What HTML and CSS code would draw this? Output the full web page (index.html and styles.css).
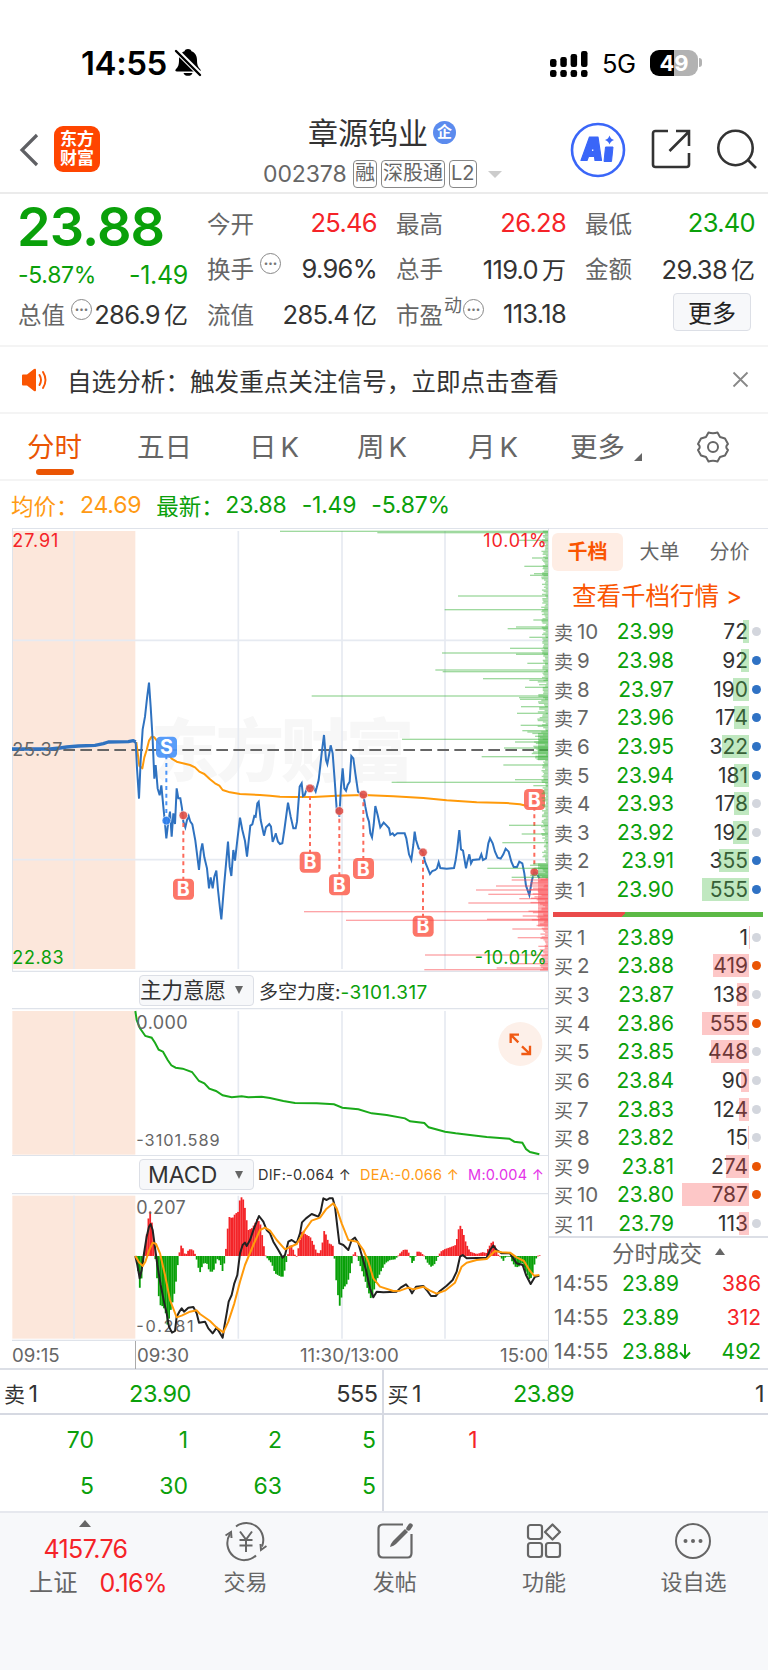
FILE: index.html
```
<!doctype html>
<html lang="zh-CN">
<head>
  <meta charset="utf-8">
  <title>章源钨业 002378</title>
  <meta name="viewport" content="width=device-width, initial-scale=1">
  <link rel="stylesheet" href="styles.css">
</head>

<body>
  <div class="statusbar">
    <span class="clock">14:55</span>
    <svg class="bell" width="28" height="30" viewBox="0 0 28 30">
      <path d="M14 1c1.800 0 3 .8 3.500 2.300C21 4.500 23 8 23 12c0 5 1 7 3 9 1.200 1.300.8 2.500-1 2.500H3c-1.800 0-2.200-1.200-1-2.500 2-2 3-4 3-9 0-4 2-7.500 5.500-8.700C11 1.800 12.200 1 14 1zM9.500 25h9c-1 3.800-8 3.800-9 0z"/>
      <path d="M3 1l26 26" stroke="#fff" stroke-width="2.200"/>
      <path d="M2 3l25 25" stroke="#fff" stroke-width="4.500"/>
      <path d="M2 3l24 24" stroke="#000" stroke-width="2.400" stroke-linecap="round"/>
    </svg>
    <svg class="signal" width="38" height="28" viewBox="0 0 38 28">
      <rect x="0" y="10" width="6.500" height="8" rx="2.200"/><rect x="10.300" y="8" width="6.500" height="10" rx="2.200"/><rect x="20.600" y="5" width="6.500" height="13" rx="2.200"/><rect x="31" y="2" width="6.500" height="16" rx="2.200"/>
      <rect x="0" y="21" width="6.500" height="7" rx="2.200"/><rect x="10.300" y="21" width="6.500" height="7" rx="2.200"/><rect x="20.600" y="21" width="6.500" height="7" rx="2.200"/><rect x="31" y="21" width="6.500" height="7" rx="2.200"/>
    </svg>
    <span class="net">5G</span>
    <div class="battery"><span>49</span></div>
    <i class="battery_tip"></i>
  </div>

  <div class="header">
    <svg class="back" width="20" height="36" viewBox="0 0 20 36"><path d="M18 3L3 18l15 15" fill="none" stroke="#5f6064" stroke-width="3.200"/></svg>
    <div class="logo"><span>东方</span><span>财富</span></div>
    <div class="stock">
      <div class="stock_name">章源钨业<span class="ent">企</span></div>
      <div class="stock_code"><b>002378</b><i>融</i><i>深股通</i><i>L2</i><em></em></div>
    </div>
    <svg class="h_icon ai" width="56" height="56" viewBox="0 0 56 56">
      <circle cx="28" cy="28" r="26" fill="none" stroke="#3a66f8" stroke-width="2.600"/>
      <path d="M19.500 15h8.500l3.500 23.500h-6.500l-.5-4h-6l-1.500 4H11zM21 29.500h3l-.5-6z" fill="#3a66f8" fill-rule="evenodd" stroke="#3a66f8" stroke-width="1.200" stroke-linejoin="round"/>
      <path d="M35.500 25h7.500l-1.500 14.500h-7.500z" fill="#3a66f8" stroke="#3a66f8" stroke-width="1" stroke-linejoin="round"/>
      <path d="M39.500 13.500q1 3.500 4.500 4.500-3.500 1-4.500 4.500-1-3.500-4.500-4.500 3.500-1 4.500-4.500z" fill="#3a66f8"/>
    </svg>
    <svg class="h_icon share" width="42" height="42" viewBox="0 0 42 42">
      <g fill="none" stroke="#333" stroke-width="2.600">
        <path d="M17 2H4.500Q2 2 2 4.500v31Q2 38 4.500 38h31q2.500 0 2.500-2.500V24"/>
        <path d="M18.500 22L38 2.500M25 2h13v15"/>
      </g>
    </svg>
    <svg class="h_icon search" width="44" height="44" viewBox="0 0 44 44">
      <circle cx="20.500" cy="20" r="17.200" fill="none" stroke="#333" stroke-width="2.600"/>
      <path d="M32.500 31.500l8.500 8.500" stroke="#333" stroke-width="2.600"/>
    </svg>
  </div>

  <div class="quote">
    <div class="quote_main">
      <div class="last green">23.88</div>
      <div class="change green"><span>-5.87%</span><b>-1.49</b></div>
    </div>
    <div class="cell"><span>今开</span><b class="red">25.46</b></div>
    <div class="cell"><span>最高</span><b class="red">26.28</b></div>
    <div class="cell"><span>最低</span><b class="green">23.40</b></div>
    <div class="cell"><span>换手</span><i class="dots">•••</i><b>9.96%</b></div>
    <div class="cell"><span>总手</span><b>119.0<u>万</u></b></div>
    <div class="cell"><span>金额</span><b>29.38<u>亿</u></b></div>
    <div class="cell"><span>总值</span><i class="dots">•••</i><b>286.9<u>亿</u></b></div>
    <div class="cell"><span>流值</span><b>285.4<u>亿</u></b></div>
    <div class="cell"><span>市盈</span><sup>动</sup><i class="dots">•••</i><b>113.18</b></div>
    <div class="cell"><button type="button" class="btn_more">更多</button></div>
  </div>

  <div class="notice">
    <svg width="26" height="28" viewBox="0 0 26 28">
      <path d="M1 8.500h4l7-5.500q2-1 2 1v20q0 2-2 1l-7-5.500H1q-1 0-1-1v-9q0-1 1-1z" fill="#fa5502"/>
      <path d="M17.500 9q3 5 0 10M21 6q5 8 0 16" fill="none" stroke="#fa5502" stroke-width="1.900" stroke-linecap="round"/>
    </svg>
    <span>自选分析：触发重点关注信号，立即点击查看</span>
    <svg class="close" width="17" height="17" viewBox="0 0 17 17"><path d="M1.500 1.500l14 14M15.500 1.500l-14 14" stroke="#888" stroke-width="1.800"/></svg>
  </div>

  <div class="tabs">
    <span class="tab on">分时</span>
    <span class="tab">五日</span>
    <span class="tab">日<b>K</b></span>
    <span class="tab">周<b>K</b></span>
    <span class="tab">月<b>K</b></span>
    <span class="tab tab_more">更多</span>
    <svg class="gear" width="34" height="34" viewBox="0 0 34 34" fill="none" stroke="#666" stroke-width="2">
      <path d="M12.500 2.500Q17 4 21.500 2.500L24 7l5 1.500 3 5.500Q28.500 17 32 20l-3 5.500-5 1.500-2.500 4.500Q17 30 12.500 31.500L10 27l-5-1.500L2 20q3.500-3 0-6l3-5.500L10 7z" stroke-linejoin="round"/>
      <circle cx="17" cy="17" r="5"/>
    </svg>
  </div>

  <div class="legend">
    <span class="orange">均价：</span><b class="orange">24.69</b>
    <span class="green">最新：</span><b class="green">23.88</b><b class="green">-1.49</b><b class="green">-5.87%</b>
  </div>

  <div class="board">
    <div class="charts">
      <!-- all chart panels use 3 svg units per css pixel -->
      <svg class="panel" width="536" height="444" viewBox="36 24 1608 1332">
        <rect x="37" y="33" width="369" height="1314" fill="#fce7db"/>
        <text class="watermark" x="452" y="768" textLength="790">东方财富</text>
        <path class="grid" d="M222 33V1347M715 33V1347M1026 33V1347M1335 33V1347M37 361H1644M37 1019H1644"/>
        <path class="frame" d="M37 1355V25H1644M37 1354H1644"/>
        <path d="M37 690H1644" stroke="#666" stroke-width="6" stroke-dasharray="35 16"/>
        <polyline class="avg" points="409,666 412,690 418,738 427,745 433,712 440,690 447,662 455,650 463,652 475,668 490,685 515,716 530,725 570,735 585,742 598,755 613,762 630,778 645,790 658,797 668,810 690,817 720,822 780,825 810,827 840,830 880,831 940,831 1010,827 1090,825 1180,829 1270,834 1340,841 1430,847 1520,849 1560,853 1590,860 1610,865"/>
        <polyline class="price auction" points="36,687 150,687 180,684 200,681 235,678 285,676 310,671 325,666 385,665 400,662 407,666"/>
        <polyline class="price" points="407,666 411,745 417,836 422,720 428,628 435,590 441,535 447,488 452,560 458,660 463,776 467,735 473,806 479,826 484,796 490,860 494,900 499,955 505,905 510,875 515,950 520,880 525,912 530,805 535,835 541,835 546,865 550,905 556,922 561,900 566,888 571,905 577,913 586,962 592,1010 597,1050 602,995 607,970 613,1012 621,1045 627,1105 632,1072 638,1105 643,1070 649,1052 654,1110 660,1165 664,1198 672,1100 680,1010 684,965 689,1040 694,1068 700,990 705,1022 712,960 720,893 727,930 735,963 741,1010 751,917 757,913 763,888 767,890 772,850 776,845 782,900 792,947 798,922 808,912 813,920 818,966 828,940"/>
        <g transform="translate(810 0)">
          <polyline class="price" points="17,940 24,965 30,972 37,970 43,930 54,848 62,890 70,925 77,925 81,905 89,800 95,790 99,828 104,825 112,800 120,805 130,800 137,815 146,780 155,700 162,645 168,720 172,732 178,700 182,676 188,700 194,780 201,880 204,870 208,890 213,800 218,745 223,805 228,812 233,795 239,785 244,708 250,715 256,760 264,815 272,822 280,825 286,860 292,890 297,905 301,940 306,952 311,915 316,858 323,885 331,922 341,908 350,917 357,925 361,944 368,940 373,947 382,940 404,940 409,955 417,1003 424,1020 430,975 434,935 438,960 446,985 459,997 465,1025 472,1042 480,1062 487,1053 496,1050 501,1045 506,1027 511,1044 530,1046 552,1044 557,1020 562,985 568,930 573,988 579,992 588,1045 592,1025 598,1003 603,1030 608,1020 628,1018 634,1003 639,1020 648,1015 655,970 660,955 668,970 675,995 683,1013 692,1016 700,1003 707,986 716,995 724,1025 731,1041 741,1041 748,1025 757,1030 763,1060 768,1097 778,1125 786,1080 793,1055 800,1060 808,1075"/>
        </g>
        <g id="marks"></g>
        <g id="depth"></g>
        <text class="lbl red" x="37" y="80" textLength="138">27.91</text>
        <text class="lbl" x="37" y="708" textLength="150">25.37</text>
        <text class="lbl green" x="37" y="1331" textLength="154">22.83</text>
        <text class="lbl red" x="1450" y="80" textLength="190">10.01%</text>
        <text class="lbl green" x="1424" y="1331" textLength="216">-10.01%</text>
      </svg>

      <div class="panel_head">
        <button type="button" class="picker">主力意愿<i></i></button>
        <span class="power">多空力度:<b class="green">-3101.317</b></span>
      </div>

      <svg class="panel" width="536" height="148" viewBox="36 144 1608 444">
        <rect x="37" y="153" width="369" height="431" fill="#fce7db"/>
        <path class="grid" d="M222 153V584M715 153V584M1026 153V584M1335 153V584"/>
        <path class="frame strong" d="M36 146H1644M36 587H1644"/>
        <polyline class="force" points="406,153 410,180 420,205 436,228 455,233 465,248 476,269 489,275 503,300 514,316 527,323 548,326 576,336 597,363 613,370 628,386 648,393 668,406 695,412 725,409 745,412 785,410 810,414 850,423 885,429 950,430 1002,433 1027,443 1075,448 1115,460 1160,465 1215,475 1230,484 1273,489 1286,502 1335,515 1367,520 1410,525 1460,531 1528,536 1543,545 1567,548 1578,567 1590,576 1618,583"/>
        <text class="lbl" x="409" y="208" textLength="154">0.000</text>
        <text class="lbl small" x="409" y="559" textLength="250">-3101.589</text>
        <circle cx="1561" cy="252" r="66" fill="#fdf0e9"/>
        <path d="M1555 247L1532 224M1532 249V224H1557M1566 259L1590 282M1590 257V282H1564" fill="none" stroke="#f05a14" stroke-width="7"/>
      </svg>

      <div class="panel_head">
        <button type="button" class="picker picker_macd">MACD<i></i></button>
        <span class="macd_vals"><span>DIF:-0.064 ↑</span><span class="orange">DEA:-0.066 ↑</span><span class="purple">M:0.004 ↑</span></span>
      </div>

      <svg class="panel" width="536" height="148" viewBox="36 699 1608 444">
        <rect x="37" y="707" width="369" height="429" fill="#fce7db"/>
        <path class="grid" d="M222 707V1136M715 707V1136M1026 707V1136M1335 707V1136"/>
        <path class="frame strong" d="M36 701H1644M36 1141H1644"/>
        <g id="hist"></g>
        <text class="lbl" x="409" y="762" textLength="148">0.207</text>
        <text class="lbl small" x="409" y="1117" textLength="172">-0.281</text>
        <polyline class="dif" points="406,888 412,915 419,955 425,930 432,880 440,830 447,800 452,792 458,810 466,870 472,915 482,975 493,1030 500,1060 507,1100 516,1118 525,1113 530,1070 538,1055 545,1045 552,1055 565,1043 580,1041 590,1060 597,1088 615,1085 625,1105 638,1120 650,1103 660,1120 668,1133 673,1100 680,1060 686,1025 695,1005 703,970 712,945 720,880 728,855 735,848 740,858 750,840 762,805 772,780 777,768 790,785 800,810 810,820 820,845 835,870 848,893 855,885 865,845 875,840 890,850 900,820 906,787 918,775 935,762 955,770 962,755 970,715 980,720 988,715 998,715 1005,740 1012,800 1018,850 1030,855 1045,870 1055,840 1065,833 1075,850 1085,885 1098,930 1110,985 1120,1012 1130,995 1150,997 1190,995 1202,983 1218,973 1228,985 1236,1000 1248,980 1270,978 1280,990 1293,1008 1307,1008 1320,993 1340,977 1358,960 1370,935 1380,890 1388,885 1400,895 1460,893 1470,870 1480,857 1490,870 1505,880 1530,880 1538,892 1550,910 1568,915 1578,945 1592,972 1605,950 1618,947"/>
        <polyline class="avg" points="406,888 418,908 428,918 436,905 448,870 458,848 468,852 480,880 495,945 510,1020 530,1072 545,1067 570,1055 590,1051 600,1062 630,1083 650,1103 670,1117 685,1085 703,1030 720,965 735,915 760,855 780,810 795,803 810,812 830,840 855,868 890,852 915,810 935,782 960,773 978,748 1000,730 1010,745 1025,790 1045,840 1072,845 1090,870 1105,905 1120,955 1140,980 1180,993 1200,992 1225,983 1240,988 1270,980 1290,992 1310,1001 1335,992 1365,968 1385,920 1400,908 1430,900 1460,897 1485,873 1505,877 1530,878 1550,892 1572,903 1588,930 1602,947 1618,945"/>
      </svg>

      <div class="axis"><span>09:15</span><span>09:30</span><span>11:30/13:00</span><span>15:00</span></div>
    </div>

    <div class="book">
      <div class="book_tabs"><span class="on">千档</span><span>大单</span><span>分价</span></div>
      <div class="book_link">查看千档行情 <b>&gt;</b></div>
      <div id="asks"></div>
      <div class="ratio"></div>
      <div id="bids"></div>
      <div class="deals_head">分时成交<i></i></div>
      <div class="deal"><span>14:55</span><b class="green">23.89</b><b class="red">386</b></div>
      <div class="deal"><span>14:55</span><b class="green">23.89</b><b class="red">312</b></div>
      <div class="deal"><span>14:55</span><b class="green">23.88<svg width="12" height="15" viewBox="0 0 12 15"><path d="M6 0v13M1 8.500L6 14l5-5.500" fill="none" stroke="#0aa00a" stroke-width="1.900"/></svg></b><b class="green">492</b></div>
    </div>
  </div>

  <div class="queue">
    <div class="side">
      <div class="side_head"><span>卖<b>1</b></span><b class="green">23.90</b><b>555</b></div>
      <div class="lots green"><b>70</b><b>1</b><b>2</b><b>5</b><b>5</b><b>30</b><b>63</b><b>5</b></div>
    </div>
    <div class="side">
      <div class="side_head"><span>买<b>1</b></span><b class="green">23.89</b><b>1</b></div>
      <div class="lots red"><b>1</b></div>
    </div>
  </div>

  <div class="nav">
    <div class="index">
      <i></i>
      <b class="red">4157.76</b>
      <div><span>上证</span><b class="red">0.16%</b></div>
    </div>
    <div class="nav_item">
      <svg width="42" height="42" viewBox="0 0 42 42" fill="none" stroke="#666" stroke-width="2">
        <path d="M11 6.500a17 17 0 0 1 26 20M31 35.500A17 17 0 0 1 5 14"/>
        <path d="M0.500 15.500L6 12l.5 6M41.500 26L36 30l-.5-6"/>
        <path d="M15 11.500l6 8 6-8M21 19.500V32M14.500 20h13M14.500 25.500h13"/>
      </svg>
      <span>交易</span>
    </div>
    <div class="nav_item">
      <svg width="42" height="42" viewBox="0 0 42 42" fill="none" stroke="#666" stroke-width="2.200">
        <path d="M29 4.500H9Q4.500 4.500 4.500 9v24q0 4.500 4.500 4.500h24.500q4 0 4-4.500V14"/>
        <path d="M16 27q1-4 3-6L31 9l3 3-12 12q-2 2-6 3z" fill="#666" stroke="none"/><path d="M34.500 8.500l2-3" stroke-width="4.500" stroke-linecap="round"/>
      </svg>
      <span>发帖</span>
    </div>
    <div class="nav_item">
      <svg width="42" height="42" viewBox="0 0 42 42" fill="none" stroke="#666" stroke-width="2.200">
        <rect x="5" y="5" width="14" height="14" rx="2.500"/><rect x="5" y="23" width="14" height="14" rx="2.500"/><rect x="23" y="23" width="14" height="14" rx="2.500"/>
        <path d="M29.500 4.500L37 12l-7.500 7.500L22 12z" stroke-linejoin="round"/>
      </svg>
      <span>功能</span>
    </div>
    <div class="nav_item">
      <svg width="42" height="42" viewBox="0 0 42 42"><circle cx="21" cy="21" r="17" fill="none" stroke="#666" stroke-width="2"/><g fill="#666"><circle cx="13.500" cy="21" r="2"/><circle cx="21" cy="21" r="2"/><circle cx="28.500" cy="21" r="2"/></g></svg>
      <span>设自选</span>
    </div>
  </div>

  <script>
    (function(document){
      // [volume, dot]: g = grey, b = blue, o = orange
      const asks = [[72,'g'],[92,'b'],[190,'b'],[174,'b'],[322,'b'],[181,'b'],[178,'g'],[192,'g'],[355,'b'],[555,'b']];
      const bids = [[1,'g'],[419,'o'],[138,'g'],[555,'o'],[448,'g'],[90,'g'],[124,'g'],[15,'g'],[274,'o'],[787,'o'],[113,'g']];

      function row(name, level, price, item, side) {
        return '<div class="row ' + side + '"><span>' + name + '<b>' + level + '</b></span><b class="green">' + price.toFixed(2) +
          '</b><b class="vol">' + item[0] + '<i style="width:' + (item[0] * 0.085).toFixed(1) + 'px"></i></b><em class="' + item[1] + '"></em></div>';
      }

      document.getElementById('asks').innerHTML = asks.map((a, i) => row('卖', 10 - i, 23.99 - i / 100, a, 'ask')).join('');
      document.getElementById('bids').innerHTML = bids.map((b, i) => row('买', i + 1, 23.89 - i / 100, b, 'bid')).join('');

      // trade marks: type, x, y of the point, y of the badge
      const marks = [['S',499,902,681],['B',550,886,1107],['B',930,805,1026],['B',1018,873,1094],['B',1090,824,1045],['B',1269,997,1218],['B',1603,1056,838]];
      document.getElementById('marks').innerHTML = marks.map(function(m) {
        const color = m[0] == 'S' ? '#4a94f8' : '#fc6a5b';
        return '<path d="M' + m[1] + ' ' + m[2] + 'V' + m[3] + '" stroke="' + color + '" stroke-width="6" stroke-dasharray="12 11"/>' +
          '<circle cx="' + m[1] + '" cy="' + m[2] + '" r="13" fill="' + (m[0] == 'S' ? '#2f80ee' : '#e05048') + '" stroke="#fff" stroke-width="2" opacity=".9"/>' +
          '<rect x="' + (m[1] - 31) + '" y="' + (m[3] - 31) + '" width="63" height="63" rx="13" fill="' + color + '" opacity=".92"/>' +
          '<text class="mark" x="' + m[1] + '" y="' + (m[3] + 22) + '">' + m[0] + '</text>';
      }).join('');

      // order depth by price, [y, length]
      const depth = [[34,804],[38,512],[61,88],[114,48],[139,71],[161,42],[166,54],[228,270],[269,310],[300,44],[321,96],[326,121],[352,56],[385,114],[399,318],[403,96],[430,62],[450,338],[455,316],[476,195],[481,56],[502,69],[528,709],[533,87],[538,84],[560,81],[580,93],[616,82],[632,77],[636,62],[658,438],[666,99],[684,132],[710,199],[735,134],[779,99],[787,469],[797,44],[916,117],[942,79],[968,137],[1045,182],[1072,109],
        [1080,109],[1098,156],[1110,216],[1123,179],[1136,86],[1149,239],[1175,732],[1188,76],[1198,183],[1201,606],[1227,107],[1253,91],[1279,29],[1305,369],[1331,114],[1344,154],[1349,371]];
      let out = '', seed = 7;
      function bar(y, len) {
        out += '<rect x="' + (1644 - len) + '" y="' + (y - 2) + '" width="' + len + '" height="4" fill="' + (y < 1075 ? '#3fb43f' : '#fb4a50') + '" fill-opacity=".5"/>';
      }
      for (let y = 34; y < 1350; y += 4.3) {
        seed = (seed * 16807) % 2147483647;
        const dense = y > 1030 && y < 1220 ? 55 : y > 640 && y < 720 ? 45 : y > 480 && y < 640 ? 28 : y > 1220 ? 20 : 16;
        bar(y, 5 + (seed % 1000) / 1000 * dense);
        if (y > 640 && y < 720 || y > 1030 && y < 1220) bar(y + 1, 30);
      }
      depth.forEach(d => bar(d[0], d[1]));
      document.getElementById('depth').innerHTML = out;

      // macd histogram outline, zero line at 888
      const hist = [[407,888],[412,910],[419,985],[424,960],[430,905],[433,888],[436,850],[442,810],[448,745],[453,765],[458,810],[462,860],[465,888],[468,920],[475,1000],[480,1035],[490,1040],[497,1060],[503,1100],[510,1060],[517,1030],[523,1000],[530,950],[534,905],[537,888],[540,862],[546,853],[552,880],[560,882],[566,868],[578,868],[584,880],[588,888],[592,910],[599,940],[606,920],[612,908],[622,912],[628,935],[640,935],[647,910],[653,895],[660,905],[667,935],[672,915],[676,888],[681,830],[686,770],[697,775],[705,762],[715,755],[720,715],[727,710],[733,730],[738,770],[745,810],[755,805],[765,790],[772,775],[782,795],[790,850],[797,888],[802,895],[815,910],[825,940],[842,950],[850,950],[856,920],[860,900],[863,888],[868,860],[872,850],[878,865],[885,885],[890,888],[896,860],[902,830],[908,805],[913,820],[920,825],[930,830],[940,850],[950,878],[960,880],[967,850],[973,810],[980,830],[986,850],[998,855],[1003,888],[1007,945],[1013,1000],[1020,1043],[1026,1000],[1030,985],[1042,970],[1050,940],[1057,900],[1058,888],[1062,880],[1067,875],[1071,888],[1075,900],[1085,930],[1095,960],[1105,995],[1115,1022],[1122,990],[1130,960],[1140,940],[1155,910],[1170,900],[1185,898],[1194,888],[1198,882],[1210,870],[1220,868],[1227,880],[1230,888],[1234,905],[1238,912],[1244,895],[1247,888],[1250,875],[1260,875],[1270,885],[1274,888],[1280,905],[1293,920],[1302,915],[1310,900],[1315,888],[1322,875],[1335,867],[1350,862],[1367,855],[1372,830],[1378,795],[1384,800],[1390,820],[1398,850],[1410,875],[1430,882],[1450,876],[1458,880],[1467,860],[1478,842],[1486,860],[1495,885],[1500,888],[1510,903],[1518,888],[1530,888],[1534,900],[1545,920],[1555,922],[1565,905],[1575,930],[1590,962],[1598,940],[1605,905],[1611,888],[1618,886],[1624,885]];
      out = '';
      let k = 0;
      for (let x = 409; x < 1622; x += 5.17) {
        while (hist[k + 1][0] < x) k++;
        const a = hist[k], b = hist[k + 1];
        const v = a[1] + (b[1] - a[1]) * (x - a[0]) / (b[0] - a[0]) - 888;
        out += '<rect x="' + (x - 2.6).toFixed(1) + '" y="' + (v < 0 ? 888 + v : 888).toFixed(1) + '" width="5.400" height="' + Math.max(2, Math.abs(v)).toFixed(1) + '" fill="' + (v < 0 ? '#f42428' : '#08a008') + '"/>';
      }
      document.getElementById('hist').innerHTML = out;
    })(document);
  </script>
</body>
</html>
```
FILE: styles.css
```
html,
body {
  background: #fff;
  margin: 0;
  padding: 0;
  font-family: Inter, "Noto Sans CJK SC", sans-serif;
  color: #333;
}

body {
  width: 768px;
  height: 1670px;
  overflow: hidden;
}

* {
  box-sizing: border-box;
}

b,
i,
em,
u {
  font-weight: normal;
  font-style: normal;
  text-decoration: none;
}

svg {
  display: block;
  flex: none;
}

.green { color: #0aa00a; fill: #0aa00a; }
.red { color: #f52328; fill: #f52328; }
.orange { color: #ff9a14; }
.purple { color: #e432e8; }

/* status bar */
.statusbar {
  display: flex;
  align-items: center;
  height: 100px;
  padding: 25px 0 0 81px;
  color: #000;
}

.clock {
  width: 93px;
  font-size: 33px;
  font-weight: 600;
  letter-spacing: -0.4px;
  white-space: nowrap;
}

.signal {
  margin-left: 348px;
}

.net {
  width: 48px;
  margin: 2px 0 0 14px;
  font-size: 25.5px;
  letter-spacing: -0.5px;
}

.battery {
  width: 48px;
  height: 26px;
  border-radius: 9px;
  background: linear-gradient(to right, #000 50%, #b2b2b2 50%);
  color: #fff;
  font-size: 22px;
  font-weight: 700;
  line-height: 26px;
  text-align: center;
}

.battery_tip {
  width: 3px;
  height: 9px;
  margin-left: 1px;
  border-radius: 0 4px 4px 0;
  background: #b2b2b2;
}

/* header */
.header {
  display: flex;
  height: 94px;
  border-bottom: 2px solid #ebebeb;
}

.back {
  margin: 32px 15px 0 19px;
}

.logo {
  display: flex;
  flex-direction: column;
  justify-content: center;
  width: 46px;
  height: 46px;
  margin-top: 26px;
  border-radius: 9px;
  background: #ff4500;
  color: #fff;
  font-size: 17px;
  font-weight: 700;
  line-height: 19px;
  text-align: center;
}

.stock {
  width: 260px;
  margin: 10px 0 0 164px;
}

.stock_name {
  display: flex;
  align-items: center;
  height: 45px;
  padding: 0 0 3px 44px;
  font-size: 30px;
}

.ent {
  width: 23px;
  height: 23px;
  margin: 3px 0 0 5px;
  border-radius: 50%;
  background: #5b8bee;
  color: #fff;
  font-size: 15px;
  font-weight: 700;
  line-height: 22px;
  text-align: center;
}

.stock_code {
  display: flex;
  align-items: center;
  gap: 4px;
  height: 38px;
  margin-left: -1px;
  color: #666;
}

.stock_code b {
  width: 86px;
  font-size: 23px;
  letter-spacing: -0.1px;
}

.stock_code i {
  height: 28px;
  padding: 0 1px;
  border: 1.5px solid #888;
  border-radius: 4px;
  font-size: 20px;
  line-height: 25px;
}

.stock_code em {
  margin-left: 7px;
  border: 7px solid transparent;
  border-top-color: #ccc;
  border-bottom: 0;
}

.ai { margin: 22px 0 0 46px; }
.share { margin: 29px 0 0 25px; }
.search { margin: 28px 0 0 22px; }

/* quote */
.quote {
  display: grid;
  grid-template-columns: repeat(4, 170px);
  grid-template-rows: repeat(3, 45.5px);
  gap: 0 19px;
  height: 153px;
  padding: 6px 0 0 18px;
  border-bottom: 2px solid #f4f4f4;
}

.quote_main {
  grid-row: span 2;
}

.last {
  height: 52px;
  margin-left: -1px;
  font-size: 54px;
  font-weight: 600;
  line-height: 53px;
  letter-spacing: -0.9px;
}

.change {
  display: flex;
  justify-content: space-between;
  height: 44px;
  font-size: 23px;
  line-height: 46px;
  letter-spacing: -0.3px;
}

.change b {
  font-size: 25px;
}

.cell {
  display: flex;
  align-items: center;
  white-space: nowrap;
}

.cell span {
  color: #666;
  font-size: 23.5px;
}

.cell b {
  margin-left: auto;
  font-size: 25.5px;
  letter-spacing: -0.7px;
}

.cell u {
  margin-left: 4px;
  font-size: 24px;
  letter-spacing: 0;
}

.cell sup {
  margin-top: -16px;
  margin-left: 1px;
  color: #666;
  font-size: 18px;
  line-height: 20px;
}

.dots {
  width: 21px;
  height: 21px;
  margin: -9px 0 0 6px;
  border: 1.5px solid #888;
  border-radius: 50%;
  color: #777;
  font-size: 8px;
  line-height: 18px;
  text-align: center;
}

sup + .dots {
  margin-left: 1px;
}

.btn_more {
  width: 78px;
  height: 38px;
  margin: -4px 4px 0 auto;
  padding: 0;
  border: 1.5px solid #dcdfe6;
  border-radius: 4px;
  background: #f7f8fa;
  color: #222;
  font: 24px "Noto Sans CJK SC", sans-serif;
  line-height: 32px;
}

/* notice */
.notice {
  display: flex;
  align-items: center;
  height: 67px;
  padding: 0 19px 0 22px;
  border-bottom: 2px solid #f4f4f4;
  font-size: 24.6px;
}

.notice span {
  margin-left: 19px;
}

.close {
  margin-left: auto;
}

/* tabs */
.tabs {
  display: flex;
  height: 67px;
  padding-left: 27px;
  border-bottom: 2px solid #f4f4f4;
  color: #666;
  font-size: 27.5px;
  line-height: 67px;
}

.tab {
  display: flex;
  width: 110px;
}

.tab b { margin-left: 4px; }
.tab:nth-child(3) { margin-left: 2px; width: 108px; }
.tab:nth-child(4) { width: 111px; }
.tab:nth-child(5) { width: 102px; }

.tab.on {
  flex-direction: column;
  color: #ea5504;
}

.tab.on::after {
  content: "";
  width: 38px;
  height: 6px;
  margin: -12px 0 0 9px;
  border-radius: 3px;
  background: #ea5504;
}

.tab_more {
  width: 126px;
}

.tab_more::after {
  content: "";
  height: 0;
  margin: 39px 0 0 9px;
  border-left: 8px solid transparent;
  border-bottom: 8px solid #666;
}

.gear {
  margin-top: 16px;
}

/* average / last price */
.legend {
  display: flex;
  align-items: center;
  height: 47px;
  padding-left: 11px;
  font-size: 22.5px;
}

.legend span { width: 69px; white-space: nowrap; }
.legend b { margin-right: 15px; font-size: 23px; letter-spacing: -0.2px; }

/* board */
.board {
  display: flex;
  height: 842px;
  border-bottom: 2px solid #dcdfe6;
}

.charts {
  width: 537px;
  margin-left: 12px;
  border-right: 1.5px solid #dcdfe6;
}

.grid { fill: none; stroke: #e6eaf1; stroke-width: 5; }
.frame { fill: none; stroke: #dfe3ea; stroke-width: 4; }
.price { fill: none; stroke: #2f72c0; stroke-width: 6; }
.auction { stroke-width: 10; stroke-linejoin: round; }
.avg { fill: none; stroke: #ff9a0a; stroke-width: 6; stroke-linejoin: round; }
.dif { fill: none; stroke: #222; stroke-width: 6; stroke-linejoin: round; }
.force { fill: none; stroke: #1aaa1a; stroke-width: 6; }

.watermark {
  fill: #f7f7f7;
  font-family: "Noto Sans CJK SC", sans-serif;
  font-size: 205px;
  font-weight: 900;
}

.lbl { font-size: 54px; }
.lbl:not(.red):not(.green) { fill: #666; }
.lbl.small { font-size: 49px; }

.mark {
  fill: #fff;
  font-size: 59px;
  font-weight: 700;
  text-anchor: middle;
}

.panel_head {
  display: flex;
  align-items: center;
  height: 36px;
  padding-left: 127px;
  white-space: nowrap;
}

.picker {
  display: flex;
  align-items: center;
  justify-content: space-between;
  width: 115px;
  height: 31px;
  padding: 0 10px 0 0;
  border: 1.5px solid #dcdfe6;
  border-radius: 4px;
  background: #f7f8fa;
  color: #333;
  font: 21.5px Inter, "Noto Sans CJK SC", sans-serif;
  line-height: 26px;
}

.picker i {
  border: 4.5px solid transparent;
  border-top: 8px solid #666;
  border-bottom: 0;
}

.picker_macd {
  padding-left: 8px;
  font-size: 23px;
}

.power {
  margin-left: 5px;
  font-size: 19px;
}

.power b {
  letter-spacing: 0.5px;
}

.macd_vals {
  display: flex;
  justify-content: space-between;
  width: 286px;
  margin-left: 4px;
  font-size: 14.5px;
  letter-spacing: 0.25px;
}

.panel + .panel_head + .panel + .panel_head {
  height: 37px;
}

.axis {
  display: flex;
  height: 28px;
  color: #666;
  font-size: 18.7px;
  line-height: 30px;
}

.axis span { width: 123px; }
.axis span:nth-child(2) { width: 165px; padding-left: 1px; border-left: 1.5px solid #aaa; }
.axis span:nth-child(3) { width: 168px; }
.axis span:last-child { flex: 1; text-align: right; }

/* order book */
.book {
  flex: 1;
  border-top: 1.5px solid #e2e5ec;
}

.book_tabs {
  display: flex;
  gap: 3px;
  height: 38px;
  margin: 4px 0 0 3px;
  color: #666;
  font-size: 20px;
  line-height: 38px;
  text-align: center;
}

.book_tabs span {
  width: 67px;
  border-radius: 6px;
}

.book_tabs .on {
  width: 71px;
  background: #feede4;
  color: #fa5502;
  font-weight: 700;
}

.book_link {
  height: 46.5px;
  padding-left: 23px;
  color: #fa5502;
  font-size: 24.5px;
  line-height: 51px;
  white-space: nowrap;
}

.row {
  display: grid;
  grid-template-columns: 49px 71px 74px 19px;
  align-items: center;
  height: 28.65px;
  padding-left: 5px;
  font-size: 21px;
}

.row span {
  display: flex;
  align-items: center;
  color: #666;
  font-size: 19px;
}

.row span b {
  margin-left: 4px;
  font-size: 20.5px;
}

.row > b {
  text-align: right;
}

.row .vol {
  position: relative;
}

.vol i {
  position: absolute;
  right: -1px;
  top: 1px;
  height: 23px;
}

.ask .vol i { background: rgba(64, 184, 64, 0.33); }
.bid .vol i { background: rgba(250, 70, 70, 0.3); }

.row em {
  width: 9px;
  height: 9px;
  margin-left: 4px;
  border-radius: 50%;
  background: #d3d6dd;
}

.row em.b { background: #2f72c4; }
.row em.o { background: #ea5504; }

.ratio {
  width: 210px;
  height: 5px;
  margin: 8px 0 6px 4px;
  background: linear-gradient(125deg, #ea4a4a 34%, #5cb946 34%);
}

#bids {
  height: 313px;
}

.deals_head {
  display: flex;
  align-items: center;
  height: 30px;
  padding-left: 63px;
  border-top: 2px solid #dcdfe6;
  color: #666;
  font-size: 22.5px;
}

.deals_head i {
  margin-left: 13px;
  border: 5px solid transparent;
  border-bottom: 7px solid #666;
  border-top: 0;
}

.deal {
  display: flex;
  align-items: center;
  height: 34.200px;
  padding: 0 7px 0 5px;
  color: #666;
  font-size: 21.3px;
}

.deal span { width: 68px; }
.deal b { display: flex; align-items: center; font-size: 21px; }
.deal b:last-child { margin-left: auto; }

/* level one queue */
.queue {
  display: flex;
  height: 141px;
}

.side {
  width: 385px;
}

.side:first-child {
  width: 384px;
  border-right: 2px solid #d6d9e2;
}

.side_head {
  display: grid;
  grid-template-columns: 56px 200px 1fr;
  height: 45px;
  padding: 0 4px;
  border-bottom: 2px solid #d6d9e2;
  font-size: 23.5px;
  line-height: 47px;
  letter-spacing: -0.5px;
}

.side_head span { font-size: 21px; }
.side_head span b { margin-left: 4px; font-size: 23.5px; }
.side_head > b { text-align: center; }
.side_head > b:last-child { text-align: right; }

.lots {
  display: grid;
  grid-template-columns: repeat(4, 94px);
  grid-auto-rows: 46px;
  padding-top: 2px;
  font-size: 23px;
  line-height: 46px;
  text-align: right;
}

/* bottom nav */
.nav {
  display: flex;
  height: 160px;
  border-top: 2px solid #e6e8ee;
  background: #f7f8fa;
  color: #666;
}

.index {
  display: flex;
  flex-direction: column;
  align-items: center;
  width: 171px;
  padding-top: 7px;
}

.index i {
  border: 6px solid transparent;
  border-bottom: 7px solid #666;
  border-top: 0;
}

.index b {
  font-size: 25px;
  line-height: 44px;
  letter-spacing: -0.6px;
}

.index div {
  display: flex;
  gap: 22px;
  margin: -10px 0 0 25px;
  font-size: 24.2px;
  line-height: 43px;
  white-space: nowrap;
}

.nav_item {
  display: flex;
  flex-direction: column;
  align-items: center;
  width: 149.300px;
  padding-top: 7px;
  font-size: 22px;
  line-height: 41px;
}
```
